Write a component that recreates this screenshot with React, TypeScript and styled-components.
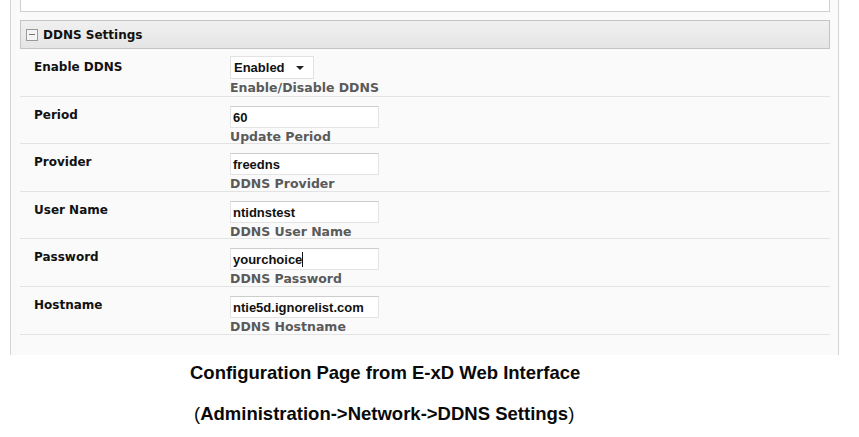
import React from "react";
import styled, { createGlobalStyle } from "styled-components";

const GlobalStyle = createGlobalStyle`
  html, body {
    margin: 0;
    padding: 0;
    background: #ffffff;
  }
  body {
    font-family: "DejaVu Sans", Verdana, sans-serif;
  }
`;

type Field = {
  label: string;
  value: string;
  help: string;
  kind?: "select" | "text";
  caret?: boolean;
};

const fields: Field[] = [
  { label: "Enable DDNS", value: "Enabled", help: "Enable/Disable DDNS", kind: "select" },
  { label: "Period", value: "60", help: "Update Period" },
  { label: "Provider", value: "freedns", help: "DDNS Provider" },
  { label: "User Name", value: "ntidnstest", help: "DDNS User Name" },
  { label: "Password", value: "yourchoice", help: "DDNS Password", caret: true },
  { label: "Hostname", value: "ntie5d.ignorelist.com", help: "DDNS Hostname" },
];

export default function App() {
  return (
    <>
      <GlobalStyle />
      <Page>
        <Panel>
          <PrevSection />
          <Section>
            <SectionHeader>
              <CollapseBox />
              DDNS Settings
            </SectionHeader>
            {fields.map((f) => (
              <Row key={f.label}>
                <Label>{f.label}</Label>
                <Control>
                  {f.kind === "select" ? (
                    <SelectWrap>
                      <Select defaultValue={f.value}>
                        <option>Enabled</option>
                        <option>Disabled</option>
                      </Select>
                      <Arrow />
                    </SelectWrap>
                  ) : (
                    <InputWrap>
                      <TextInput readOnly value={f.value} />
                      {f.caret && <Caret />}
                    </InputWrap>
                  )}
                  <Help>{f.help}</Help>
                </Control>
              </Row>
            ))}
          </Section>
        </Panel>
        <Caption>
          <CaptionLine>Configuration Page from E-xD Web Interface</CaptionLine>
          <CaptionLine $indent={4}>
            <Paren>(</Paren>Administration-&gt;Network-&gt;DDNS Settings<Paren>)</Paren>
          </CaptionLine>
        </Caption>
      </Page>
    </>
  );
}

const Page = styled.div`
  width: 859px;
  height: 437px;
  overflow: hidden;
`;

const Panel = styled.div`
  margin-left: 10px;
  width: 829px;
  height: 355px;
  box-sizing: border-box;
  padding: 0 8px 0 9px;
  background: #fafafa;
  border-left: 1px solid #d4d4d4;
  border-right: 1px solid #d4d4d4;
`;

const PrevSection = styled.div`
  height: 12px;
  box-sizing: border-box;
  background: #ffffff;
  border: 1px solid #cfcfcf;
  border-top: none;
`;

const Section = styled.div`
  margin-top: 8px;
`;

const SectionHeader = styled.div`
  height: 29px;
  box-sizing: border-box;
  display: flex;
  align-items: center;
  gap: 5px;
  padding: 1px 0 0 5px;
  background: linear-gradient(#f0f0f0, #e5e5e5);
  border: 1px solid #c4c4c4;
  font-size: 12px;
  font-weight: bold;
  color: #111;
`;

const CollapseBox = styled.span`
  position: relative;
  width: 12px;
  height: 12px;
  box-sizing: border-box;
  border: 1px solid #9a9a9a;
  background: #f4f4f4;
  &::after {
    content: "";
    position: absolute;
    left: 2px;
    right: 2px;
    top: 4px;
    height: 1px;
    background: #777;
  }
`;

const Row = styled.div`
  height: 47.6px;
  box-sizing: border-box;
  display: grid;
  grid-template-columns: 210px 1fr;
  padding-top: 7px;
  border-bottom: 1px solid #e3e3e3;
`;

const Label = styled.div`
  padding: 3px 0 0 14px;
  font-size: 12px;
  line-height: 16px;
  font-weight: bold;
  color: #111;
`;

const Control = styled.div`
  display: flex;
  flex-direction: column;
  align-items: flex-start;
`;

const SelectWrap = styled.div`
  position: relative;
  width: 84px;
  height: 23px;
`;

const Select = styled.select`
  appearance: none;
  width: 100%;
  height: 100%;
  box-sizing: border-box;
  margin: 0;
  padding: 0 0 0 3px;
  background: #fff;
  border: 1px solid #e2e2e2;
  border-radius: 0;
  font-family: "Liberation Sans", Arial, sans-serif;
  font-size: 13px;
  font-weight: bold;
  color: #111;
  outline: none;
`;

const Arrow = styled.span`
  position: absolute;
  right: 10px;
  top: 10px;
  width: 0;
  height: 0;
  border-left: 4px solid transparent;
  border-right: 4px solid transparent;
  border-top: 4px solid #222;
  pointer-events: none;
`;

const InputWrap = styled.div`
  position: relative;
  width: 149px;
  height: 22px;
  margin-top: 2px;
`;

const TextInput = styled.input`
  width: 100%;
  height: 100%;
  box-sizing: border-box;
  margin: 0;
  padding: 1px 0 0 2px;
  background: #fff;
  border: 1px solid #e4e4e4;
  border-top-color: #cdcdcd;
  border-radius: 0;
  font-family: "Liberation Sans", Arial, sans-serif;
  font-size: 13px;
  font-weight: bold;
  color: #111;
  outline: none;
`;

const Caret = styled.span`
  position: absolute;
  left: 72px;
  top: 4px;
  width: 1px;
  height: 15px;
  background: #111;
`;

const Help = styled.div`
  margin-top: 1px;
  font-size: 12.5px;
  line-height: 16px;
  font-weight: bold;
  color: #5a5a5a;
`;

const Caption = styled.div`
  padding: 7px 0 0 190px;
  font-family: "Liberation Sans", Arial, sans-serif;
  font-weight: bold;
  font-size: 18.5px;
  color: #0a0a0a;
`;

const CaptionLine = styled.div<{ $indent?: number }>`
  height: 41px;
  line-height: 22px;
  padding-left: ${(p) => p.$indent ?? 0}px;
`;

const Paren = styled.span`
  font-weight: normal;
`;
